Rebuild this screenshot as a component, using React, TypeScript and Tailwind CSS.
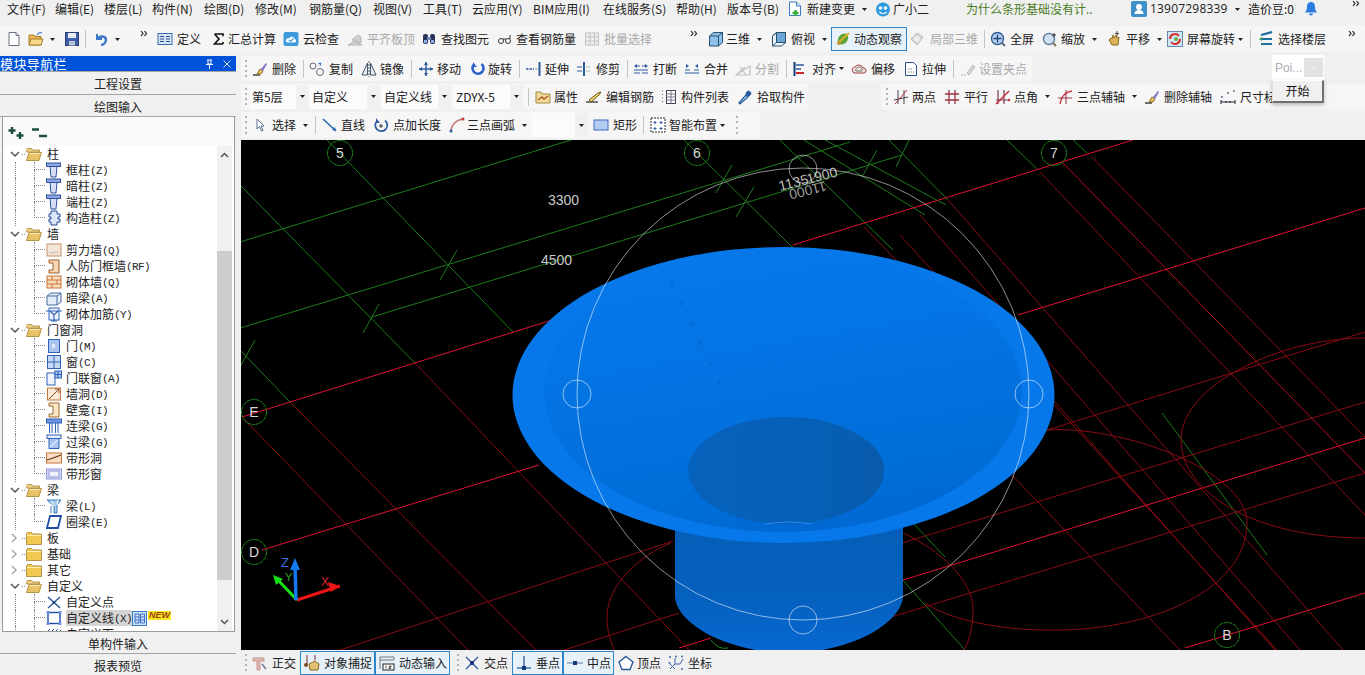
import React from "react";

type P = { children?: React.ReactNode };
const S = ({ children }: P) => (
  <svg width="16" height="16" viewBox="0 0 16 16" className="block shrink-0">
    {children}
  </svg>
);
const B = "#2f62b8";
const LB = "#a9c4ee";
const O = "#c8743a";

const Caret = ({ cls = "ml-[7px]" }: { cls?: string }) => (
  <svg width="5" height="3" viewBox="0 0 5 3" className={`block shrink-0 ${cls}`}>
    <path d="M0 0H5L2.5 3Z" fill="#222" />
  </svg>
);
const More = ({ cls = "" }: { cls?: string }) => (
  <svg width="8" height="7" viewBox="0 0 8 7" className={`block shrink-0 ${cls}`}>
    <path d="M1 1l2 2.5L1 6M4.5 1l2 2.5L4.5 6" fill="none" stroke="#222" strokeWidth="1.2" />
  </svg>
);
const Grip = ({ cls }: { cls: string }) => (
  <div className={`flex h-[18px] flex-col justify-between shrink-0 ${cls}`}>
    {[0, 1, 2, 3].map((i) => (
      <div key={i} className="h-[2px] w-[2px] bg-[#b4b4b4]" />
    ))}
  </div>
);
const Sep = ({ cls }: { cls: string }) => (
  <div className={`h-[18px] shrink-0 ${cls}`}>
    <div className="h-full w-px bg-[#c4c4c4]" />
  </div>
);

const Tool = ({
  cls,
  icon,
  label,
  dim,
  caret,
  lc = "ml-1",
}: {
  cls: string;
  icon?: React.ReactNode;
  label: string;
  dim?: boolean;
  caret?: string;
  lc?: string;
}) => (
  <div className={`flex shrink-0 items-center ${cls}`}>
    {icon}
    <span className={`whitespace-nowrap ${lc} ${dim ? "text-[#a9a9a9]" : "text-[#202020]"}`}>{label}</span>
    {caret && <Caret cls={caret} />}
  </div>
);

/* ---------- toolbar icons ---------- */
const I = {
  newDoc: <S><path d="M3 1.5h7l3 3v10H3z" fill="#fff" stroke="#6b7280" /><path d="M10 1.5v3h3" fill="#dfe5ee" stroke="#6b7280" /></S>,
  open: <S><path d="M1 4h5l1 1.5h6V14H1z" fill="#e6b85a" stroke="#a97c28" /><path d="M3 8h12l-2 6H1z" fill="#f6d98c" stroke="#a97c28" /><path d="M9 4c1-2 3-3 5-2" fill="none" stroke="#3f7fd0" strokeWidth="1.2" /></S>,
  save: <S><rect x="1.5" y="1.5" width="13" height="13" fill="#3f5fa8" stroke="#2a3f78" /><rect x="4" y="2" width="8" height="5" fill="#e8eef8" /><rect x="5" y="10" width="6" height="4.5" fill="#b8c4dc" /></S>,
  undo: <S><path d="M4 3v5h5" fill="none" stroke="#3f78c8" strokeWidth="2" /><path d="M4 8c3-4 9-3 9 1 0 3-3 5-5 5" fill="none" stroke="#3f78c8" strokeWidth="2.4" /></S>,
  def: <S><rect x="1" y="2.5" width="14" height="11" fill="#d6e4f6" stroke="#3c6cab" /><path d="M3 5.5h4M3 8h4M3 10.5h4M9 5.5h4M9 8h4M9 10.5h4" stroke="#27508c" /></S>,
  sigma: <S><path d="M3.5 3H12v2.2M12 13H3.5L8 8 3.5 3M12 13v-2" fill="none" stroke="#111" strokeWidth="1.6" /></S>,
  cloud: <S><rect x="0.5" y="1" width="15" height="14" rx="2" fill="#3d9bdc" /><path d="M3 9.5c0-2 2-2.5 3-2 1-2.5 5-2 5.5.5 2 .2 2 3.5 0 3.5H4.500C3.500 11.500 3 10.500 3 9.500Z" fill="#fff" /><path d="M6 9l1.500 1.500L10.500 7.500" fill="none" stroke="#3d9bdc" strokeWidth="1.2" /></S>,
  flat: <S><path d="M1 14l7-4 7 4zM5 9l6-5 3 2v6z" fill="#d0d0d0" stroke="#b5b5b5" /></S>,
  find: <S><rect x="2" y="3" width="5" height="10" rx="2" fill="#28345c" /><rect x="9" y="3" width="5" height="10" rx="2" fill="#28345c" /><rect x="6" y="6" width="4" height="3" fill="#7088b8" /><rect x="3" y="9" width="3" height="3" fill="#8fb0e0" /><rect x="10" y="9" width="3" height="3" fill="#8fb0e0" /></S>,
  rebar: <S><circle cx="4" cy="10" r="2.500" fill="none" stroke="#333" /><circle cx="11" cy="10" r="2.500" fill="none" stroke="#333" /><path d="M6 8h3M13 8V4" stroke="#333" /></S>,
  batch: <S><rect x="1.500" y="2" width="13" height="12" fill="#eee" stroke="#c4c4c4" /><path d="M1.500 6h13M1.500 10h13M6 2v12M10.500 2v12" stroke="#c4c4c4" /></S>,
  cube: <S><path d="M1.500 5l4-3.500h9v10l-4 3.500h-9z" fill="#8fc0ea" stroke="#27506f" /><path d="M1.500 5h9v10M10.500 5l4-3.500" fill="none" stroke="#27506f" /></S>,
  cube2: <S><path d="M1.500 5l4-3.500h9v10l-4 3.500h-9z" fill="#eef6fd" stroke="#27506f" /><path d="M5.500 1.500h9v10h-9z" fill="#6ea6d8" stroke="#27506f" /><path d="M1.500 5l4-3.500M5.500 11.500l-4 3.500" stroke="#27506f" /></S>,
  orbit: <S><ellipse cx="8" cy="8" rx="4.500" ry="6" transform="rotate(40 8 8)" fill="#5da332" /><path d="M3 12L14 2" stroke="#d9b22c" strokeWidth="2" /><circle cx="4" cy="12" r="2" fill="#c9952a" /></S>,
  local: <S><path d="M8 2l6 4-6 8-6-6z" fill="#d4d4d4" stroke="#bcbcbc" /><circle cx="8" cy="8" r="3" fill="#eee" /></S>,
  full: <S><circle cx="7.500" cy="7.500" r="6" fill="#b8d0ee" stroke="#2d5a96" strokeWidth="1.400" /><path d="M7.500 3.500v8M3.500 7.500h8" stroke="#1f447c" strokeWidth="1.300" /><path d="M12 12l3 3" stroke="#667" strokeWidth="2" /></S>,
  zoom: <S><circle cx="7" cy="8" r="5.500" fill="#cfe0f0" stroke="#617c9c" strokeWidth="1.400" /><path d="M11 12l3 3" stroke="#775" strokeWidth="2" /><path d="M12 2v4M10 4h4" stroke="#333" /></S>,
  pan: <S><path d="M3 9l2-2 1 1 1-4 1 3 2-3 1 3 2-1-1 8H6z" fill="#d9b25a" stroke="#8c6a22" /><path d="M11 0v5M9 2.500h4" stroke="#444" /></S>,
  rot: <S><rect x="0.500" y="0.500" width="15" height="15" fill="#cfe7f7" stroke="#68a" /><path d="M3 8a5 5 0 0 1 9-3" fill="none" stroke="#d8332a" strokeWidth="2" /><path d="M13 8a5 5 0 0 1-9 3" fill="none" stroke="#d8332a" strokeWidth="2" /><circle cx="9" cy="8" r="2" fill="#68b040" /></S>,
  floors: <S><path d="M3 4l11-3M3 8h11M3 13h11" stroke="#1d6f9c" strokeWidth="2.200" /><path d="M1 8l3-2v4z" fill="#3a9a4a" /></S>,
  del: <S><path d="M1 14h7" stroke="#444" strokeWidth="1.500" /><path d="M5 13l3-5 3 2-2 3z" fill="#e8c868" stroke="#8a6a20" /><path d="M9 8l5-6 1 1-4 7z" fill="#8a72c4" /></S>,
  copy: <S><circle cx="4" cy="5" r="3" fill="none" stroke="#667" /><circle cx="11" cy="11" r="3.500" fill="none" stroke="#667" /><path d="M9 3l3-1-1 3" fill="none" stroke="#3a7ac8" /></S>,
  mirror: <S><path d="M6.500 2L1 14h5.500zM9.500 2L15 14H9.500z" fill="#e8eef8" stroke="#456" /><path d="M8 0v16" stroke="#456" strokeDasharray="2 1" /></S>,
  move: <S><path d="M8 1v14M1 8h14" stroke="#2c5a9c" strokeWidth="1.400" /><path d="M8 1l2 3H6zM8 15l2-3H6zM1 8l3-2v4zM15 8l-3-2v4z" fill="#2c5a9c" /></S>,
  rotate: <S><path d="M4 3.500a5.500 5.500 0 1 0 7.500-.5" fill="none" stroke="#2f62c8" strokeWidth="2.600" /><path d="M3 1v5h4z" fill="#2f62c8" /></S>,
  extend: <S><path d="M0 8h8" stroke="#2c5a9c" strokeDasharray="2.500 1" strokeWidth="1.500" /><path d="M9.500 8h2" stroke="#889" /><path d="M13.500 1v14" stroke="#2c5a9c" strokeWidth="2" /></S>,
  trim: <S><path d="M7 1v14" stroke="#2c5a9c" strokeWidth="2" /><path d="M0 6h5M0 10h5" stroke="#2c5a9c" /><path d="M9 6h5M9 10h5" stroke="#99a" strokeDasharray="1.500 1" /></S>,
  brk: <S><path d="M1 5l3-2v4zM15 5l-3-2v4z" fill="#2c5a9c" /><path d="M4 5h3M9 5h3" stroke="#2c5a9c" /><path d="M1 12h6M9 12h6M1 9h14" stroke="#2c5a9c" strokeWidth="1.200" /></S>,
  merge: <S><path d="M5 5L2 3v4zM11 5l3-2v4z" fill="#2c5a9c" /><path d="M1 12h14M1 9h5M10 9h5" stroke="#2c5a9c" strokeWidth="1.200" /></S>,
  split: <S><path d="M1 14h14L15 5zM1 14l9-8M5 6l6 8" fill="none" stroke="#c0c0c0" strokeWidth="1.200" /></S>,
  align: <S><path d="M1.500 1v14" stroke="#123a7c" strokeWidth="2" /><path d="M3 4h8M3 8h5" stroke="#2c5a9c" strokeWidth="1.500" /><path d="M3 12h8" stroke="#c82a2a" strokeWidth="2" /></S>,
  offset: <S><path d="M2 11a3 3 0 0 1 2-5 4.500 4.500 0 0 1 8 1 2.500 2.500 0 0 1 1 5H3z" fill="#f3e3e0" stroke="#a04040" /><path d="M5 10a2 2 0 0 1 1-3 3 3 0 0 1 5 1v2z" fill="none" stroke="#777" /></S>,
  stretch: <S><path d="M2.500 1.500h8l3 3v10h-11z" fill="#fff" stroke="#27508c" /><path d="M5 11h6M5 8h4" stroke="#888" strokeDasharray="1.500 1" /></S>,
  grip: <S><path d="M1 14h6" stroke="#c4c4c4" strokeDasharray="2 1" strokeWidth="1.500" /><path d="M7 12l6-8 2 2-6 8z" fill="#d4d4d4" stroke="#bbb" /></S>,
  attr: <S><path d="M1 3h5l1 2h8v9H1z" fill="#f0dc9a" stroke="#a28a3e" /><path d="M3 11l4-3 2 2 4-3" fill="none" stroke="#b2551e" strokeWidth="1.400" /></S>,
  edit: <S><path d="M0 13h12" stroke="#333" strokeWidth="1.300" /><path d="M3 11l9-7 3-1-2 3-8 7z" fill="#eed36a" stroke="#6a5a1e" /></S>,
  list: <S><path d="M1 2h2M1 5.500h2M1 9h2M1 12.500h2" stroke="#555" strokeDasharray="1 1" /><rect x="5.500" y="1.500" width="9" height="13" fill="#fff" stroke="#445" /><path d="M5.500 5h9M5.500 8h9M5.500 11h9M10 1.500v13" stroke="#778" /></S>,
  pick: <S><path d="M2 14l7-8 2 2-8 7z" fill="#bcd8f6" stroke="#245a9c" strokeWidth="1.200" /><rect x="9" y="2" width="5" height="5" rx="1.500" transform="rotate(45 11.500 4.500)" fill="#245a9c" /></S>,
  twoP: <S><path d="M1 11l14-3M5 1v14M11 1v14" stroke="#445" /><path d="M2 15L14 1" stroke="#c03838" /></S>,
  para: <S><path d="M1 5h14M1 11h14M5 1v14M11 1v14" stroke="#9c3440" strokeWidth="1.300" /></S>,
  angle: <S><path d="M3 1v14M9 1v14M1 11h14" stroke="#803c4c" strokeWidth="1.200" /><path d="M1 15L14 2" stroke="#c82a3a" strokeWidth="1.400" /><circle cx="14" cy="11" r="1.200" fill="#c82a3a" /></S>,
  three: <S><path d="M3 15C4 8 8 3 15 2" fill="none" stroke="#c82a3a" strokeWidth="1.300" /><path d="M9 1v14M1 9h14" stroke="#a03040" /></S>,
  dim: <S><path d="M1 13h14M1 11v4M15 11v4M6 12v2M10 12v2" stroke="#223" /><rect x="1" y="7" width="2" height="2" fill="#88a" /><rect x="7" y="3" width="2" height="2" fill="#88a" /><rect x="13" y="1" width="2" height="2" fill="#8a8" /></S>,
  cursor: <S><path d="M5 2v10l2.500-2.500L9.500 14l1.500-.7-2-4.300H12z" fill="#fff" stroke="#5a7498" /></S>,
  line: <S><path d="M1 2l13 12" stroke="#2c6ab0" strokeWidth="1.700" /><path d="M14 14l-4-1 3-3z" fill="#2c6ab0" /></S>,
  addLen: <S><path d="M4 4a6 6 0 1 0 8-.5" fill="none" stroke="#2c5a9c" strokeWidth="1.700" /><path d="M3 1v5h4z" fill="#2c5a9c" /><path d="M8 7v4M6 9h4" stroke="#333" /></S>,
  arc: <S><path d="M2 15C2 8 7 3 14 2" fill="none" stroke="#c87878" strokeWidth="1.600" /><circle cx="2" cy="14" r="1.500" fill="#2c5a9c" /><circle cx="14" cy="2" r="1.500" fill="#c83a3a" /></S>,
  rect: <S><rect x="1" y="3" width="14" height="10" fill="#b4ccf4" stroke="#3c68b8" /></S>,
  smart: <S><rect x="1" y="1" width="14" height="14" fill="#fff" stroke="#223" strokeDasharray="2 1" /><path d="M5 4v3M3.500 5.500h3M11 4v3M9.500 5.500h3M5 10v3M3.500 11.500h3M11 10v3M9.500 11.500h3" stroke="#2c5a9c" /></S>,
  ortho: <S><path d="M1 3h11v3H8v9H5V6H1z" fill="#dfb6b0" stroke="#c89a90" /><path d="M10 9l4 5" stroke="#6a7a90" strokeWidth="1.500" /></S>,
  snap: <S><path d="M3 0v9M11 0v5" stroke="#7a2a2a" /><circle cx="2" cy="10" r="2" fill="#7a4a2a" /><path d="M5 9l6-3 4 3-1 6H6z" fill="#e2c272" stroke="#8a6a22" /></S>,
  dyn: <S><path d="M1 2h14M1 5h14M1 2v12M15 2v3" stroke="#777" /><rect x="4" y="9" width="11" height="6" fill="#fff" stroke="#222" /><path d="M7 10.500v3M10 11h2v1h-2v1.500h2" stroke="#222" strokeWidth=".8" fill="none" /></S>,
  cross: <S><path d="M2 2l12 12M14 2L2 14" stroke="#2c5a9c" strokeWidth="1.300" /><rect x="6" y="6" width="4" height="4" fill="#123a7c" /></S>,
  perp: <S><path d="M1 13h14" stroke="#2c5a9c" strokeWidth="1.300" /><path d="M8 1v12" stroke="#2c5a9c" strokeWidth="1.300" /><rect x="6" y="11" width="4" height="4" fill="#123a7c" /></S>,
  mid: <S><path d="M0 8h16" stroke="#7a94bc" strokeWidth="1.300" /><rect x="6" y="6" width="4" height="4" fill="#123a7c" /></S>,
  top: <S><path d="M8 1.500L15 7l-3 7.500H4L1 7z" fill="#fff" stroke="#2c5a9c" strokeWidth="1.400" /></S>,
  coord: <S><path d="M2 14l5-5h5l3-5M7 3v6M2 9l5 5" fill="none" stroke="#3c68a8" /><circle cx="2" cy="2" r="1" fill="#3c68a8" /><circle cx="8" cy="1.500" r="1" fill="#3c68a8" /><circle cx="14" cy="1.500" r="1" fill="#3c68a8" /><circle cx="1.500" cy="8" r="1" fill="#3c68a8" /><circle cx="14" cy="14" r="1" fill="#3c68a8" /></S>,
};

/* ---------- tree icons ---------- */
const col = <S><rect x="0.500" y="1" width="14" height="3.500" fill="#8da6e6" stroke="#2f4f9c" /><path d="M4 4.500h7l-1 10.500H5z" fill="#d5e0f8" stroke="#2f4f9c" /></S>;
const T: Record<string, React.ReactNode> = {
  col,
  gz: <S><path d="M5 1h6v3h3v3h-2v2h2v3h-3v3H5v-3H3V9h2V7H3V4h2z" fill="#dde7fa" stroke="#234a98" /></S>,
  shear: <S><rect x="1" y="2" width="14" height="12" fill="#f4e6d8" stroke="#c89068" /><path d="M3 11l2-1 1 2 2-3 1 2 2-2 1 3" stroke="#b0a8a0" fill="none" strokeDasharray="1 1" /></S>,
  door: <S><path d="M3 2h10v13H3v-3h4V5H3z" fill="#f8d8b4" stroke="#9c5a24" /></S>,
  brick: <S><rect x="1" y="2" width="14" height="12" fill="#f8dcbc" stroke={O} /><path d="M1 6h14M1 10h14M6 2v4M11 6v4M6 10v4" stroke={O} /></S>,
  ab: <S><path d="M1 6l4-3h10v9l-4 3H1z" fill="#e4ecf8" stroke="#456c9c" /><path d="M1 6h10v9M11 6l4-3" fill="none" stroke="#456c9c" /></S>,
  rein: <S><rect x="3" y="2" width="10" height="12" fill="#eef3fc" stroke={B} /><path d="M0 5h16M4 5l4 4 4-4M8 9v6M5 15h6" fill="none" stroke={B} strokeWidth="1.200" /></S>,
  men: <S><rect x="2.500" y="1.500" width="11" height="13" fill={LB} stroke={B} /><rect x="6" y="6" width="3" height="4" fill="#dde8fa" /></S>,
  win: <S><rect x="1.500" y="1.500" width="13" height="13" fill="#c8daf8" stroke={B} /><path d="M8 1.500v13M1.500 8h13" stroke={B} /></S>,
  mlc: <S><rect x="1" y="3" width="8" height="12" fill="#eef3fc" stroke={B} /><rect x="9" y="1" width="6.500" height="7" fill={LB} stroke={B} /><path d="M12 1v7M9 4.500h6.500" stroke={B} /></S>,
  hole: <S><rect x="1.500" y="2" width="13" height="12" fill="#f8e8d8" stroke={O} /><path d="M3 13L13 3M9 3h4v4" fill="none" stroke="#88481c" /></S>,
  niche: <S><path d="M3 1h10v14H3v-3h4V4H3z" fill="#fbe6c8" stroke="#9c6a2c" /></S>,
  ll: <S><rect x="0.500" y="1" width="15" height="4" fill="#6f94e0" stroke={B} /><path d="M3.500 5v10M12 5v10M6 5v10M9.500 5v10" stroke={B} /></S>,
  gl: <S><rect x="1" y="1" width="14" height="3.500" fill="#e8eefa" stroke={B} /><path d="M3 4.500h10v10H3z" fill="#a9c4ee" stroke={B} /><path d="M4 13l8-7" stroke="#fff" /></S>,
  strip: <S><rect x="0.500" y="3" width="15" height="10" fill="#f8dcc4" stroke={O} /><path d="M1 10c4-1 9-3 14-5" stroke="#6a3a18" strokeWidth="1.200" /></S>,
  sw: <S><rect x="0.500" y="3" width="15" height="10" fill="#d4d8f8" stroke="#9098d8" /><rect x="3" y="5" width="10" height="6" fill="#eef0fc" stroke="#9098d8" /></S>,
  beam: <S><path d="M1 2h14l-4 5v8H8V8z" fill="#a4cdf0" stroke="#3c7cc0" /><path d="M8 8l-3-5M11 7l1-5M6 9v6" stroke="#fff" /><path d="M5 8v7" stroke="#3c7cc0" /></S>,
  ring: <S><path d="M4 2h11l-3 12H1z" fill="#fff" stroke="#1f4ea8" strokeWidth="1.800" /></S>,
  pt: <S><path d="M2 3l12 11M14 3L2 14" stroke="#2c5a9c" strokeWidth="1.500" /><circle cx="8" cy="8.500" r="1.200" fill="#123a7c" /></S>,
  ln: <S><rect x="2" y="2.500" width="12" height="11" fill="none" stroke="#1f4ea8" strokeWidth="1.400" /><rect x="0.500" y="1" width="3" height="3" fill="#6f94e0" /><rect x="12.500" y="1" width="3" height="3" fill="#6f94e0" /><rect x="0.500" y="12" width="3" height="3" fill="#6f94e0" /><rect x="12.500" y="12" width="3" height="3" fill="#6f94e0" /></S>,
  hatch: <S><path d="M1 6l3-3M5 6l3-3M9 6l3-3M13 6l2-2" stroke="#2c5a9c" /></S>,
};

const Chevron = ({ open }: { open: boolean }) =>
  open ? (
    <svg width="10" height="7" viewBox="0 0 10 7" className="block"><path d="M1 1l4 4 4-4" fill="none" stroke="#555" strokeWidth="1.500" /></svg>
  ) : (
    <svg width="7" height="10" viewBox="0 0 7 10" className="block"><path d="M1 1l4 4-4 4" fill="none" stroke="#a8a8a8" strokeWidth="1.500" /></svg>
  );

const Folder = ({ open }: { open: boolean }) => (
  <svg width="16" height="13" viewBox="0 0 16 13" className="block shrink-0">
    {open ? (
      <>
        <path d="M.5 2.500l1-2h4l1 1.500h7v2H.5z" fill="#f0d488" stroke="#b6954a" />
        <path d="M3 4.500h12.500L13 12.500H.5z" fill="#e8c264" stroke="#b6954a" />
        <path d="M3.500 5.500h11" stroke="#faeec0" />
      </>
    ) : (
      <>
        <path d="M.5 2l1-1.500h4L7 2h8.500v10.500H.5z" fill="#f2c850" stroke="#b6954a" />
        <path d="M1 3.500h14" stroke="#fdeeb0" />
      </>
    )}
  </svg>
);

const FRow = ({ label, open = true }: { label: string; open?: boolean }) => (
  <div className="flex h-4 items-center">
    <div className="flex w-[17px] shrink-0 justify-center pl-[2px]"><Chevron open={open} /></div>
    <div className="mr-[1px] w-[3px] shrink-0 border-t border-dotted border-[#888]" />
    <Folder open={open} />
    <span className="ml-[5px] text-[12px]">{label}</span>
  </div>
);

const CRow = ({ icon, name, code, last, sel }: { icon: React.ReactNode; name: string; code?: string; last?: boolean; sel?: boolean }) => (
  <div className="flex h-4 items-center pl-[10px]">
    <div className="h-full w-[19px] shrink-0 border-l border-dotted border-[#888]" />
    <div className="h-full w-[12px] shrink-0">
      <div className="h-[8px] w-[11px] border-l border-b border-dotted border-[#888]" />
      {!last && <div className="h-[8px] w-[11px] border-l border-dotted border-[#888]" />}
    </div>
    {icon}
    <span className={`ml-[4px] flex h-4 items-center whitespace-nowrap text-[12px] ${sel ? "bg-[#d4d4d4]" : ""}`}>
      {name}
      {code && <span className="mt-[3px] font-['Liberation_Mono',monospace] text-[11px] tracking-[-0.6px]">{code}</span>}
    </span>
    {sel && (
      <>
        <svg width="15" height="15" viewBox="0 0 15 15" className="block shrink-0">
          <rect x=".5" y=".5" width="14" height="14" fill="#cfe4fa" stroke="#3a7cc4" />
          <path d="M3 3h4v9H3zM8.500 3h4v9h-4zM3 6h4M3 9h4M8.500 6h4M8.500 9h4" fill="none" stroke="#3a6cc0" />
        </svg>
        <span className="mb-[6px] ml-px bg-[#f6e820] px-px text-[9px] font-bold italic leading-[9px] text-[#a04010] font-['Liberation_Sans',sans-serif]">NEW</span>
      </>
    )}
  </div>
);

const PanelBtn = ({ label, cls }: { label: string; cls: string }) => (
  <div className={`flex items-center justify-center border-b border-[#a4a4a4] pt-[2px] text-[12px] text-[#222] ${cls}`}>{label}</div>
);

const Tree = () => (
  <div className="h-[485px] flex-1 overflow-hidden bg-white text-[#222]">
    <FRow label="柱" />
    <CRow icon={T.col} name="框柱" code="(Z)" />
    <CRow icon={T.col} name="暗柱" code="(Z)" />
    <CRow icon={T.col} name="端柱" code="(Z)" />
    <CRow icon={T.gz} name="构造柱" code="(Z)" last />
    <FRow label="墙" />
    <CRow icon={T.shear} name="剪力墙" code="(Q)" />
    <CRow icon={T.door} name="人防门框墙" code="(RF)" />
    <CRow icon={T.brick} name="砌体墙" code="(Q)" />
    <CRow icon={T.ab} name="暗梁" code="(A)" />
    <CRow icon={T.rein} name="砌体加筋" code="(Y)" last />
    <FRow label="门窗洞" />
    <CRow icon={T.men} name="门" code="(M)" />
    <CRow icon={T.win} name="窗" code="(C)" />
    <CRow icon={T.mlc} name="门联窗" code="(A)" />
    <CRow icon={T.hole} name="墙洞" code="(D)" />
    <CRow icon={T.niche} name="壁龛" code="(I)" />
    <CRow icon={T.ll} name="连梁" code="(G)" />
    <CRow icon={T.gl} name="过梁" code="(G)" />
    <CRow icon={T.strip} name="带形洞" />
    <CRow icon={T.sw} name="带形窗" last />
    <FRow label="梁" />
    <CRow icon={T.beam} name="梁" code="(L)" />
    <CRow icon={T.ring} name="圈梁" code="(E)" last />
    <FRow label="板" open={false} />
    <FRow label="基础" open={false} />
    <FRow label="其它" open={false} />
    <FRow label="自定义" />
    <CRow icon={T.pt} name="自定义点" />
    <CRow icon={T.ln} name="自定义线" code="(X)" sel />
    <CRow icon={T.hatch} name="自定义面" />
  </div>
);

const ScrollBar = () => (
  <div className="mr-[2px] flex h-[485px] w-[15px] shrink-0 flex-col bg-[#f0f0f0]">
    <div className="flex h-[18px] items-center justify-center">
      <svg width="9" height="6" viewBox="0 0 9 6" className="block"><path d="M1 5l3.500-3.500L8 5" fill="none" stroke="#555" strokeWidth="1.500" /></svg>
    </div>
    <div className="h-[87px]" />
    <div className="h-[329px] bg-[#cdcdcd]" />
    <div className="flex flex-1 items-end justify-center pb-[6px]">
      <svg width="9" height="6" viewBox="0 0 9 6" className="block"><path d="M1 1l3.500 3.500L8 1" fill="none" stroke="#555" strokeWidth="1.500" /></svg>
    </div>
  </div>
);

const LeftPanel = () => (
  <div className="flex w-[236px] shrink-0 flex-col">
    <div className="flex h-[15px] items-center bg-[#0052d9] text-[13px] leading-none text-white">
      <span className="tracking-[0.4px]">模块导航栏</span>
      <svg width="9" height="10" viewBox="0 0 9 10" className="ml-[138px] block shrink-0"><path d="M2 1h5M3 1v4h3V1M1 5.500h7M4.500 5.500V10" stroke="#fff" fill="none" /></svg>
      <svg width="8" height="8" viewBox="0 0 8 8" className="ml-[9px] block shrink-0"><path d="M.5.5l7 7M7.500.5l-7 7" stroke="#d8e4ff" /></svg>
    </div>
    <PanelBtn label="工程设置" cls="h-[24px] border-t border-[#a4a4a4]" />
    <PanelBtn label="绘图输入" cls="h-[22px]" />
    <div className="ml-[2px] flex h-[515px] w-[233px] flex-col border-x border-b border-[#9a9a9a] bg-white">
      <div className="flex h-[29px] items-center gap-[5px] bg-[#fafafa] pl-[5px]">
        <svg width="18" height="16" viewBox="0 0 18 16" className="block"><path d="M4 3v7M.5 6.500h7M12 8v7M8.500 11.500h7" stroke="#1f4f3a" strokeWidth="2.400" /></svg>
        <svg width="18" height="16" viewBox="0 0 18 16" className="block"><path d="M1 5.500h7M8 12h8" stroke="#1f4f3a" strokeWidth="2.400" /></svg>
      </div>
      <div className="flex flex-1 overflow-hidden">
        <div className="flex flex-1 overflow-hidden pl-[2px]"><div className="flex-1 overflow-hidden"><Tree /></div></div>
        <ScrollBar />
      </div>
    </div>
    <PanelBtn label="单构件输入" cls="h-[22px]" />
    <PanelBtn label="报表预览" cls="h-[21px] border-b-0" />
  </div>
);

/* ---------- 3D canvas ---------- */
const RED = "#e01030";
const DIM = "#8a0a14";
const GRN = "#1c7a1c";
const brightLines: number[][] = [
  [793, 245, 1133, 140],
  [1018, 315, 1365, 208],
  [242, 417, 552, 320],
  [262, 550, 539, 465],
  [903, 580, 1365, 438],
  [1185, 648, 1365, 593],
  [679, 648, 711, 638],
];
const dimLines: number[][] = [
  [340, 650, 673, 541],
  [564, 650, 679, 613],
  [902, 543, 1365, 402],
  [891, 617, 1365, 473],
  [1047, 430, 1365, 332],
  [415, 363, 689, 650],
  [290, 402, 536, 650],
  [242, 417, 468, 650],
  [948, 200, 1343, 650],
  [920, 215, 1300, 650],
  [900, 235, 1277, 650],
  [1010, 473, 1180, 650],
  [1047, 393, 1275, 650],
  [1040, 172, 1365, 515],
  [1092, 157, 1365, 437],
  [864, 227, 920, 285],
];
const greenLines: number[][] = [
  [240, 242, 571, 140],
  [240, 328, 850, 142],
  [372, 317, 902, 155],
  [327, 140, 513, 332],
  [240, 185, 415, 363],
  [240, 350, 290, 402],
  [440, 280, 457, 250],
  [363, 333, 379, 304],
  [240, 367, 255, 340],
  [684, 140, 793, 248],
  [716, 193, 732, 165],
  [736, 217, 754, 187],
  [896, 167, 909, 140],
  [862, 177, 877, 150],
  [780, 140, 893, 250],
  [804, 140, 925, 215],
  [825, 140, 946, 205],
  [889, 140, 948, 200],
  [1007, 140, 1038, 170],
  [1073, 140, 1087, 153],
  [1162, 413, 1267, 555],
  [913, 523, 945, 557],
  [900, 577, 965, 650],
];
const Bubble = ({ x, y, t }: { x: number; y: number; t: string }) => (
  <g>
    <circle cx={x} cy={y} r="12.500" fill="none" stroke="#1f8a1f" strokeDasharray="4 .6" />
    <text x={x} y={y + 5} fill="#d8d8d8" fontSize="14" textAnchor="middle">{t}</text>
  </g>
);

const Canvas = () => (
  <svg width="1124" height="510" viewBox="241 140 1124 510" className="block shrink-0 bg-black" fontFamily="Liberation Sans, sans-serif">
    <defs>
      <linearGradient id="inner" x1="0.300" y1="0" x2="0.600" y2="1">
        <stop offset="0" stopColor="#0678ea" />
        <stop offset="0.400" stopColor="#0474e4" />
        <stop offset="0.800" stopColor="#006ed8" />
        <stop offset="1" stopColor="#0068d2" />
      </linearGradient>
      <linearGradient id="hole" x1="0" y1="0" x2="1" y2="0">
        <stop offset="0" stopColor="#0662bc" />
        <stop offset="0.800" stopColor="#065eb4" />
        <stop offset="1" stopColor="#0a5aa8" />
      </linearGradient>
      <linearGradient id="cyl" x1="0" y1="0" x2="0" y2="1">
        <stop offset="0" stopColor="#045eb8" />
        <stop offset="0.500" stopColor="#0460bc" />
        <stop offset="1" stopColor="#0868d2" />
      </linearGradient>
    </defs>
    {greenLines.map((l, i) => <line key={i} x1={l[0]} y1={l[1]} x2={l[2]} y2={l[3]} stroke={GRN} />)}
    {dimLines.map((l, i) => <line key={i} x1={l[0]} y1={l[1]} x2={l[2]} y2={l[3]} stroke={DIM} />)}
    <line x1="1063" y1="163" x2="1365" y2="473" stroke="#b80c20" />
    {brightLines.map((l, i) => <line key={i} x1={l[0]} y1={l[1]} x2={l[2]} y2={l[3]} stroke={RED} />)}
    <g fill="none" stroke={DIM}>
      <path d="M1047 430C1120 425 1247 470 1247 523C1247 590 1150 632 1047 630C1000 630 950 620 925 603" />
      <path d="M1365 338C1280 338 1181 385 1181 440C1181 490 1250 538 1365 538" />
      <path d="M903 533C940 550 973 580 973 610C973 625 970 640 964 650" />
      <path d="M671 543C640 555 607 585 607 617C607 630 610 640 614 650" />
    </g>
    <path d="M711 640Q718 650 728 648" fill="none" stroke="#1f8a1f" />
    <Bubble x={340} y={153} t="5" />
    <Bubble x={697} y={153} t="6" />
    <Bubble x={1054} y={153} t="7" />
    <Bubble x={254} y={412} t="E" />
    <Bubble x={254} y={552} t="D" />
    <Bubble x={1227} y={635} t="B" />
    <text x="548" y="205" fill="#c8c8c8" fontSize="14">3300</text>
    <text x="541" y="265" fill="#c8c8c8" fontSize="14">4500</text>
    <text x="0" y="0" fill="#bcbcbc" fontSize="14" transform="translate(780 191) rotate(-14)">1135</text>
    <text x="0" y="0" fill="#bcbcbc" fontSize="14" transform="translate(808 184) rotate(-14)">1900</text>
    <text x="0" y="0" fill="#9c9c9c" fontSize="14" transform="translate(825 181) rotate(166)">11000</text>

    {/* post */}
    <path d="M675 525V597C677 625 730 653 789 653C848 653 900 625 903 597V525Z" fill="url(#cyl)" />
    {/* flange */}
    <ellipse cx="783.500" cy="395" rx="271" ry="148" fill="#0678ea" />
    <ellipse cx="783" cy="391" rx="239" ry="141" fill="url(#inner)" />
    <ellipse cx="786" cy="470.500" rx="98" ry="53.500" fill="url(#hole)" />
    <line x1="671" y1="282" x2="729" y2="403" stroke="#0a5cb4" strokeDasharray="5 17" />
    <path d="M765 524Q790 520 812 524" fill="none" stroke="#2a8af0" />

    {/* orbit gizmo */}
    <g fill="none" stroke="#fff" strokeOpacity=".55">
      <circle cx="803" cy="394" r="226" />
      <circle cx="577" cy="394" r="14" />
      <circle cx="1029" cy="394" r="14" />
      <circle cx="803" cy="169" r="14" />
      <circle cx="803" cy="620" r="14" />
    </g>

    {/* axes */}
    <path d="M297 600L340 586" stroke="#f01414" strokeWidth="3" />
    <path d="M340 586L328 582L331 592Z" fill="#f01414" />
    <path d="M297 600L276 578" stroke="#14e014" strokeWidth="3" />
    <path d="M273 575L283 579L276 585Z" fill="#14e014" />
    <path d="M296 600L295 565" stroke="#1478f0" strokeWidth="3.500" />
    <path d="M295 558L300 570H290Z" fill="#1478f0" />
    <text x="281" y="567" fill="#3a70d8" fontSize="13">Z</text>
    <text x="285" y="581" fill="#30a030" fontSize="11">Y</text>
    <text x="321" y="586" fill="#d82020" fontSize="12">X</text>
  </svg>
);

const SelectBox = ({ label, w, cw }: { label: string; w: string; cw: string }) => (
  <>
    <div className={`flex h-[24px] shrink-0 items-center bg-[#fbfbfb] pl-[2px] ${w}`}>{label}</div>
    <div className={`flex h-[24px] shrink-0 items-center justify-center bg-[#f0f0f0] ${cw}`}><Caret cls="" /></div>
  </>
);

const actBox = "h-[24px] border border-[#2e86c8] bg-[#e6f1fa] pl-[3px]";

export default function App() {
  return (
    <div className="relative flex h-[675px] w-[1365px] flex-col overflow-hidden bg-[#f0f0f0] font-['Noto_Sans_CJK_SC','Liberation_Sans',sans-serif] text-[12px] leading-none text-[#202020]">
      {/* menu */}
      <div className="flex h-[26px] shrink-0 items-center pb-[8px] pl-[7px]">
        {[
          ["文件(F)", "w-[48px]"], ["编辑(E)", "w-[49px]"], ["楼层(L)", "w-[48px]"], ["构件(N)", "w-[52px]"],
          ["绘图(D)", "w-[51px]"], ["修改(M)", "w-[54px]"], ["钢筋量(Q)", "w-[64px]"], ["视图(V)", "w-[50px]"],
          ["工具(T)", "w-[49px]"], ["云应用(Y)", "w-[61px]"], ["BIM应用(I)", "w-[70px]"], ["在线服务(S)", "w-[73px]"],
          ["帮助(H)", "w-[51px]"], ["版本号(B)", "w-[60px]"],
        ].map(([t, w]) => (
          <div key={t} className={`shrink-0 whitespace-nowrap ${w}`}>{t}</div>
        ))}
        <Tool
          cls="w-[88px]"
          icon={<S><path d="M2.500 1h7l4 4v9.500h-11z" fill="#fff" stroke="#3a7cc4" /><path d="M9.500 1v4h4" fill="#cfe4fa" stroke="#3a7cc4" /><path d="M8.500 9v6M5.500 12h6" stroke="#3cae3c" strokeWidth="2.600" /></S>}
          label="新建变更"
          caret="ml-[7px]"
        />
        <div className="flex w-[91px] shrink-0 items-center">
          <svg width="16" height="15" viewBox="0 0 16 15" className="block shrink-0">
            <circle cx="8" cy="7.500" r="7" fill="#2e9ae0" />
            <circle cx="5.500" cy="6" r="1.800" fill="#fff" />
            <circle cx="10.500" cy="6" r="1.800" fill="#fff" />
            <path d="M4.500 10c2 2 5 2 7 0" fill="none" stroke="#fff" strokeWidth="1.200" />
          </svg>
          <span className="ml-[2px]">广小二</span>
        </div>
        <div className="w-[165px] shrink-0 whitespace-nowrap text-[#4a7c1e]">为什么条形基础没有计..</div>
        <div className="flex w-[117px] shrink-0 items-center">
          <svg width="16" height="16" viewBox="0 0 16 16" className="block shrink-0">
            <rect width="16" height="16" rx="2" fill="#3f8fc8" />
            <circle cx="8" cy="6" r="3" fill="#fff" />
            <path d="M3.500 13c0-3 2-4 4.500-4s4.500 1 4.500 4z" fill="#fff" />
          </svg>
          <span className="ml-[3px] font-['Open_Sans','Liberation_Sans',sans-serif] text-[12px] tracking-[0.2px]">13907298339</span>
          <Caret cls="ml-[7px]" />
        </div>
        <div className="w-[57px] shrink-0 whitespace-nowrap">造价豆:0</div>
        <svg width="12" height="14" viewBox="0 0 12 14" className="block shrink-0">
          <path d="M6 0c3 0 4 2.500 4 5 0 3 1 4 2 5.500H0C1 9 2 8 2 5c0-2.500 1-5 4-5zM4 11.500h4a2 2 0 0 1-4 0z" fill="#2a7ce0" />
        </svg>
        <More cls="ml-[35px] -mt-[12px]" />
      </div>

      {/* main toolbar */}
      <div className="flex h-[26px] shrink-0 items-center bg-[#f5f5f5] pl-[6px]">
        <div className="w-[22px] shrink-0">{I.newDoc}</div>
        <div className="flex w-[36px] shrink-0 items-center">{I.open}<Caret cls="ml-[6px]" /></div>
        <div className="w-[21px] shrink-0">{I.save}</div>
        <Sep cls="w-[8px]" />
        <div className="flex w-[47px] shrink-0 items-center">{I.undo}<Caret cls="ml-[6px]" /></div>
        <More cls="mb-[12px] mr-[9px]" />
        <Tool cls="w-[54px]" icon={I.def} label="定义" />
        <Tool cls="w-[72px]" icon={I.sigma} label="汇总计算" lc="ml-[1px]" />
        <Tool cls="w-[64px]" icon={I.cloud} label="云检查" />
        <Tool cls="w-[74px]" icon={I.flat} label="平齐板顶" dim />
        <Tool cls="w-[76px]" icon={I.find} label="查找图元" />
        <Tool cls="w-[87px]" icon={I.rebar} label="查看钢筋量" lc="ml-[3px]" />
        <Tool cls="w-[106px]" icon={I.batch} label="批量选择" dim />
        <More cls="mb-[12px] mr-[10px]" />
        <Tool cls="w-[63px]" icon={I.cube} label="三维" lc="ml-[2px]" caret="ml-[7px]" />
        <Tool cls="w-[60px]" icon={I.cube2} label="俯视" caret="ml-[7px]" />
        <Tool cls={`w-[76px] ${actBox}`} icon={I.orbit} label="动态观察" lc="ml-[3px]" />
        <div className="w-[2px] shrink-0" />
        <Tool cls="w-[75px]" icon={I.local} label="局部三维" dim lc="ml-[5px]" />
        <Sep cls="w-[6px]" />
        <Tool cls="w-[52px]" icon={I.full} label="全屏" />
        <Tool cls="w-[64px]" icon={I.zoom} label="缩放" lc="ml-[3px]" caret="ml-[7px]" />
        <Tool cls="w-[61px]" icon={I.pan} label="平移" caret="ml-[7px]" />
        <Tool cls="w-[83px]" icon={I.rot} label="屏幕旋转" caret="ml-[3px]" />
        <Sep cls="w-[8px]" />
        <Tool cls="w-[90px]" icon={I.floors} label="选择楼层" />
        <More cls="mb-[12px]" />
      </div>
      <div className="h-[4px] shrink-0" />

      <div className="flex min-h-0 flex-1">
        <LeftPanel />
        <div className="ml-[5px] flex w-[1124px] shrink-0 flex-col">
          {/* edit toolbar */}
          <div className="flex h-[28px] shrink-0 items-start">
            <div className="flex h-[25px] w-[791px] items-center bg-[#f6f6f6] pl-[4px]">
              <Grip cls="w-[7px]" />
              <Tool cls="w-[51px]" icon={I.del} label="删除" />
              <Sep cls="w-[6px]" />
              <Tool cls="w-[52px]" icon={I.copy} label="复制" />
              <Tool cls="w-[50px]" icon={I.mirror} label="镜像" lc="ml-[3px]" />
              <Sep cls="w-[7px]" />
              <Tool cls="w-[52px]" icon={I.move} label="移动" lc="ml-[3px]" />
              <Tool cls="w-[49px]" icon={I.rotate} label="旋转" lc="ml-[2px]" />
              <Sep cls="w-[7px]" />
              <Tool cls="w-[51px]" icon={I.extend} label="延伸" lc="ml-[3px]" />
              <Tool cls="w-[50px]" icon={I.trim} label="修剪" lc="ml-[3px]" />
              <Sep cls="w-[6px]" />
              <Tool cls="w-[51px]" icon={I.brk} label="打断" />
              <Tool cls="w-[51px]" icon={I.merge} label="合并" />
              <Tool cls="w-[51px]" icon={I.split} label="分割" dim />
              <Sep cls="w-[7px]" />
              <Tool cls="w-[58px]" icon={I.align} label="对齐" lc="ml-[3px]" caret="ml-[3px]" />
              <Tool cls="w-[52px]" icon={I.offset} label="偏移" />
              <Tool cls="w-[50px]" icon={I.stretch} label="拉伸" lc="ml-[3px]" />
              <Sep cls="w-[7px]" />
              <Tool cls="w-[67px]" icon={I.grip} label="设置夹点" dim lc="ml-[3px]" />
            </div>
          </div>
          {/* property toolbar */}
          <div className="flex h-[28px] shrink-0 items-start">
            <div className="flex h-[25px] w-[567px] shrink-0 items-center bg-[#f6f6f6] pl-[4px]">
              <Grip cls="w-[5px]" />
              <SelectBox label="第5层" w="w-[46px]" cw="w-[12px]" />
              <div className="w-[2px] shrink-0" />
              <SelectBox label="自定义" w="w-[57px]" cw="w-[13px]" />
              <div className="w-[2px] shrink-0" />
              <SelectBox label="自定义线" w="w-[56px]" cw="w-[13px]" />
              <div className="w-[2px] shrink-0" />
              <div className="flex h-[24px] w-[57px] shrink-0 items-center bg-[#fbfbfb] pl-[3px]">ZDYX-5</div>
              <div className="flex h-[24px] w-[13px] shrink-0 items-center justify-center bg-[#f0f0f0]"><Caret cls="" /></div>
              <div className="w-[5px] shrink-0" />
              <Sep cls="w-[7px]" />
              <Tool cls="w-[51px]" icon={I.attr} label="属性" lc="ml-[3px]" />
              <Tool cls="w-[75px]" icon={I.edit} label="编辑钢筋" />
              <Tool cls="w-[76px]" icon={I.list} label="构件列表" />
              <Tool cls="w-[66px]" icon={I.pick} label="拾取构件" />
            </div>
            <div className="ml-[73px] flex h-[25px] w-[484px] shrink-0 items-center overflow-hidden bg-[#f6f6f6] pl-[5px]">
              <Grip cls="w-[7px]" />
              <Tool cls="w-[51px]" icon={I.twoP} label="两点" lc="ml-[3px]" />
              <Tool cls="w-[51px]" icon={I.para} label="平行" />
              <Tool cls="w-[62px]" icon={I.angle} label="点角" lc="ml-[3px]" caret="ml-[7px]" />
              <Tool cls="w-[87px]" icon={I.three} label="三点辅轴" caret="ml-[7px]" />
              <Tool cls="w-[76px]" icon={I.del} label="删除辅轴" />
              <Tool cls="w-[60px]" icon={I.dim} label="尺寸标注" />
            </div>
          </div>
          {/* draw toolbar */}
          <div className="flex h-[28px] shrink-0 items-start">
            <div className="flex h-[26px] w-[519px] shrink-0 items-center bg-[#f6f6f6] pl-[4px]">
              <Grip cls="w-[7px]" />
              <Tool cls="w-[63px]" icon={I.cursor} label="选择" caret="ml-[7px]" />
              <Sep cls="w-[7px]" />
              <Tool cls="w-[51px]" icon={I.line} label="直线" lc="ml-[3px]" />
              <Tool cls="w-[76px]" icon={I.addLen} label="点加长度" />
              <Tool cls="w-[83px]" icon={I.arc} label="三点画弧" lc="ml-[2px]" caret="ml-[7px]" />
              <div className="h-[24px] w-[43px] shrink-0 bg-[#fbfbfb]" />
              <div className="flex h-[24px] w-[13px] shrink-0 items-center justify-center bg-[#f0f0f0]"><Caret cls="" /></div>
              <div className="w-[5px] shrink-0" />
              <Tool cls="w-[50px]" icon={I.rect} label="矩形" />
              <Sep cls="w-[7px]" />
              <Tool cls="w-[86px]" icon={I.smart} label="智能布置" lc="ml-[3px]" caret="ml-[3px]" />
              <Grip cls="w-[24px]" />
            </div>
          </div>
          <Canvas />
          {/* status bar */}
          <div className="flex h-[25px] shrink-0 items-center pl-[4px]">
            <Grip cls="w-[7px]" />
            <Tool cls="w-[48px]" icon={I.ortho} label="正交" />
            <Tool cls={`w-[75px] ${actBox}`} icon={I.snap} label="对象捕捉" lc="ml-[4px]" />
            <Tool cls={`w-[75px] ${actBox}`} icon={I.dyn} label="动态输入" lc="ml-[4px]" />
            <div className="w-[7px] shrink-0" />
            <Grip cls="w-[7px]" />
            <Tool cls="w-[48px]" icon={I.cross} label="交点" />
            <Tool cls={`w-[51px] ${actBox}`} icon={I.perp} label="垂点" />
            <Tool cls={`w-[51px] ${actBox}`} icon={I.mid} label="中点" lc="ml-[4px]" />
            <div className="w-[4px] shrink-0" />
            <Tool cls="w-[50px]" icon={I.top} label="顶点" lc="ml-[3px]" />
            <Tool cls="w-[50px]" icon={I.coord} label="坐标" />
          </div>
        </div>
      </div>

      {/* floating Poi panel */}
      <div className="absolute left-[1272px] top-[55px] w-[52px]">
        <div className="flex h-[25px] items-center justify-between bg-white pl-[3px] pr-px text-[12px] text-[#adadad]">
          <span className="font-['Liberation_Sans',sans-serif]">Poi...</span>
          <div className="flex h-[19px] w-[19px] items-center justify-center bg-[#e2e2e2] text-[8px] text-[#f4f4f4]">×</div>
        </div>
        <div className="flex h-[23px] items-center justify-center border-b-2 border-r-2 border-l border-t border-l-[#e0e0e0] border-t-[#ffffff] border-b-[#707070] border-r-[#707070] bg-[#f0f0f0] text-[12px] text-[#111] shadow-[0_2px_4px_rgba(0,0,0,0.25)]">开始</div>
      </div>
    </div>
  );
}
